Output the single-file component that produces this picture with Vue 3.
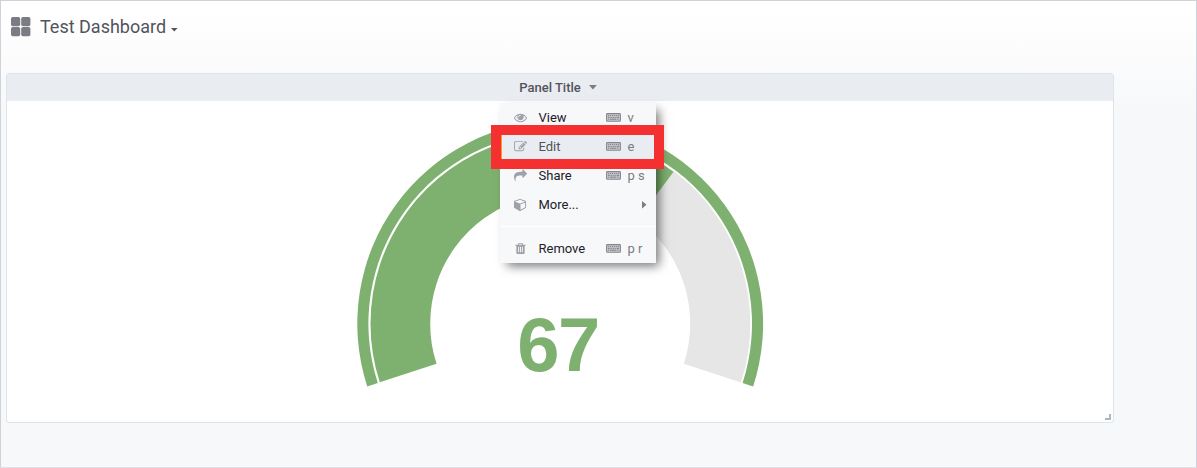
<script setup>
const icons = {
  eye: 'M1664 960q-152-236-381-353 61 104 61 225 0 185-131.5 316.5t-316.5 131.5-316.5-131.5-131.5-316.5q0-121 61-225-229 117-381 353 133 205 333.5 326.5t434.5 121.5 434.5-121.5 333.5-326.5zm-720-384q0-20-14-34t-34-14q-125 0-214.5 89.5t-89.5 214.5q0 20 14 34t34 14 34-14 14-34q0-86 61-147t147-61q20 0 34-14t14-34zm848 384q0 34-20 69-140 230-376.5 368.5t-499.5 138.5-499.5-139-376.5-368q-20-35-20-69t20-69q140-229 376.5-368t499.5-139 499.5 139 376.5 368q20 35 20 69z',
  edit: 'M888 1184l116-116-152-152-116 116v56h96v96h56zm440-720q-16-16-33 1l-350 350q-17 17-1 33t33-1l350-350q17-17 1-33zm80 594v190q0 119-84.5 203.5t-203.5 84.5h-832q-119 0-203.5-84.5t-84.5-203.5v-832q0-119 84.5-203.5t203.5-84.5h832q63 0 117 25 15 7 18 23 3 17-9 29l-49 49q-14 14-32 8-23-6-45-6h-832q-66 0-113 47t-47 113v832q0 66 47 113t113 47h832q66 0 113-47t47-113v-126q0-13 9-22l64-64q15-15 35-7t20 29zm-96-738l288 288-672 672h-288v-288zm444 132l-92 92-288-288 92-92q28-28 68-28t68 28l152 152q28 28 28 68t-28 68z',
  share: 'M1792 640q0 26-19 45l-512 512q-19 19-45 19t-45-19-19-45v-256h-224q-98 0-175.5 6t-154 21.5-133 42.5-105.5 69.5-80 101-48.5 138.5-17.5 181q0 55 5 123 0 6 2.5 23.5t2.5 26.5q0 15-8.5 25t-23.5 10q-16 0-28-17-7-9-13-22t-13.5-30-10.5-24q-127-285-127-451 0-199 53-333 162-403 875-403h224v-256q0-26 19-45t45-19 45 19l512 512q19 19 19 45z',
  cube: 'M896 1629l640-349v-636l-640 233v752zm-64-865l698-254-698-254-698 254zm832-252v768q0 35-18 65t-49 47l-704 384q-28 16-61 16t-61-16l-704-384q-31-17-49-47t-18-65v-768q0-40 23-73t61-47l704-256q22-8 44-8t44 8l704 256q38 14 61 47t23 73z',
  trash: 'M704 1376v-704q0-14-9-23t-23-9h-64q-14 0-23 9t-9 23v704q0 14 9 23t23 9h64q14 0 23-9t9-23zm256 0v-704q0-14-9-23t-23-9h-64q-14 0-23 9t-9 23v704q0 14 9 23t23 9h64q14 0 23-9t9-23zm256 0v-704q0-14-9-23t-23-9h-64q-14 0-23 9t-9 23v704q0 14 9 23t23 9h64q14 0 23-9t9-23zm-544-992h448l-48-117q-7-9-17-11h-317q-10 2-17 11zm928 32v64q0 14-9 23t-23 9h-96v948q0 83-47 143.5t-113 60.5h-832q-66 0-113-58.5t-47-141.5v-952h-96q-14 0-23-9t-9-23v-64q0-14 9-23t23-9h309l70-167q15-37 54-63t79-26h320q40 0 79 26t54 63l70 167h309q14 0 23 9t9 23z',
}

const items = [
  { label: 'View', icon: 'eye', keys: 'v' },
  { label: 'Edit', icon: 'edit', keys: 'e', active: true },
  { label: 'Share', icon: 'share', keys: 'p s' },
  { label: 'More...', icon: 'cube', submenu: true },
  { label: 'Remove', icon: 'trash', keys: 'p r', divided: true },
]

// Gauge geometry in the coordinates of the panel body
const cx = 553.2
const cy = 222.7
const value = 67
const START = 198
const SWEEP = 216

function point(r, deg) {
  const a = (deg * Math.PI) / 180
  return `${(cx + r * Math.cos(a)).toFixed(2)} ${(cy - r * Math.sin(a)).toFixed(2)}`
}

function ring(inner, outer, from, to) {
  const a = START - SWEEP * from
  const b = START - SWEEP * to
  const large = a - b > 180 ? 1 : 0
  return `M${point(outer, a)}A${outer} ${outer} 0 ${large} 1 ${point(outer, b)}L${point(inner, b)}A${inner} ${inner} 0 ${large} 0 ${point(inner, a)}Z`
}

const track = ring(130, 190.1, value / 100, 1)
const fill = ring(130, 189.7, 0, value / 100)
const threshold = ring(191.8, 202.9, 0, 1)
</script>

<template>
  <div class="page">
    <header class="navbar">
      <svg class="grid-icon" viewBox="0 0 20 20">
        <rect x="0" y="0" width="9.2" height="9.2" rx="1.8" />
        <rect x="10.2" y="0" width="9.2" height="9.2" rx="1.8" />
        <rect x="0" y="10" width="9.2" height="9.2" rx="1.8" />
        <rect x="10.2" y="10" width="9.2" height="9.2" rx="1.8" />
      </svg>
      <span class="title">Test Dashboard</span>
      <svg class="title-caret" viewBox="0 0 7 4"><path d="M0 0h6.6L3.3 3.6z" /></svg>
    </header>

    <section class="panel">
      <div class="panel-header">
        <span>Panel Title</span>
        <svg class="panel-caret" viewBox="0 0 8 5"><path d="M0 0h7.8L3.9 4.5z" /></svg>
      </div>
      <div class="panel-body">
        <svg class="gauge" viewBox="0 0 1106 321">
          <path class="track" :d="track" />
          <path class="ok" :d="fill" />
          <path class="ok" :d="threshold" />
          <text class="ok value" x="551" y="270" text-anchor="middle">{{ value }}</text>
        </svg>
      </div>
      <svg class="resize" viewBox="0 0 6 6"><path d="M4 0h2v6H0V4h4z" /></svg>

      <div class="menu">
        <div
          v-for="item in items"
          :key="item.label"
          class="entry"
          :class="{ divided: item.divided }"
        >
          <div class="item" :class="{ active: item.active }">
            <svg class="icon" viewBox="0 0 1792 1792"><path :d="icons[item.icon]" /></svg>
            <span class="label">{{ item.label }}</span>
            <svg v-if="item.submenu" class="arrow" viewBox="0 0 5 8"><path d="M0 0l4.5 3.8L0 7.6z" /></svg>
            <template v-else>
              <svg class="keyboard" viewBox="0 0 15 9">
                <rect x=".6" y=".6" width="13.8" height="7.6" rx=".8" class="case" />
                <path class="keys" d="M2 2.6h1.2m.8 0h1.2m.8 0h1.2m.8 0h1.2m.8 0h1.2m.8 0h1M2 4.4h1.8m.8 0h1.2m.8 0h1.2m.8 0h1.2m.8 0h2.4M2 6.2h1.2m.8 0h6.4m.8 0h1.4" />
              </svg>
              <span class="shortcut">{{ item.keys }}</span>
            </template>
          </div>
        </div>
        <div class="highlight"></div>
      </div>
    </section>
  </div>
</template>

<style>
body {
  margin: 0;
}
</style>

<style scoped>
.page {
  box-sizing: border-box;
  width: 1197px;
  height: 468px;
  overflow: hidden;
  border: 1px solid #d0d2da;
  border-bottom-color: #dfe1e5;
  background: linear-gradient(180deg, #fff 10px, #f7f8fa 110px);
  font-family: Roboto, "Liberation Sans", sans-serif;
  color: #52545c;
}
.navbar {
  display: flex;
  align-items: center;
  height: 52px;
  padding-left: 10px;
}
.grid-icon {
  width: 20px;
  height: 20px;
  fill: #7b7c83;
}
.title {
  margin-left: 9px;
  font-size: 18px;
  line-height: 24px;
}
.title-caret {
  width: 7px;
  height: 4px;
  margin: 5px 0 0 5px;
  fill: #52545c;
}
.panel {
  position: relative;
  box-sizing: border-box;
  width: 1108px;
  height: 350px;
  margin: 20px 0 0 5px;
  border: 1px solid #dde4ed;
  border-radius: 3px;
  background: #fff;
}
.panel-header {
  display: flex;
  align-items: center;
  justify-content: center;
  box-sizing: border-box;
  height: 27px;
  padding-right: 4px;
  background: #e9ecf1;
  font-size: 13px;
  font-weight: 500;
  color: #52545c;
}
.panel-caret {
  width: 8px;
  height: 5px;
  margin: 0 0 0 8px;
  fill: #7b7c83;
}
.panel-body {
  height: 321px;
}
.gauge {
  display: block;
  width: 1106px;
  height: 321px;
}
.track {
  fill: #e6e6e6;
}
.ok {
  fill: #7eb06f;
}
.value {
  font: bold 76px "Liberation Sans", Arial, sans-serif;
  letter-spacing: -1.5px;
}
.resize {
  position: absolute;
  right: 2px;
  bottom: 2px;
  width: 6px;
  height: 6px;
  fill: #acb6bf;
}
.menu {
  position: absolute;
  left: 493px;
  top: 29px;
  box-sizing: border-box;
  width: 156px;
  height: 160px;
  background: #f7f8fa;
  box-shadow: 5px 5px 10px -2px rgba(0, 0, 0, 0.55);
}
.entry.divided {
  margin-top: 7px;
  padding-top: 7px;
  border-top: 1px solid #fff;
}
.item {
  display: flex;
  align-items: center;
  box-sizing: border-box;
  height: 29px;
  padding-left: 14px;
  font-size: 13px;
  color: #1e2028;
}
.item.active {
  color: #52545c;
  background: #e9ecf1;
}
.icon {
  width: 13px;
  height: 13px;
  fill: #9fa1aa;
}
.label {
  width: 68px;
  margin-left: 11.5px;
}
.keyboard {
  width: 15px;
  height: 9px;
  margin-left: -0.5px;
}
.case {
  fill: #c9cad0;
  stroke: #85868e;
  stroke-width: 1.1;
}
.keys {
  stroke: #7f8088;
  stroke-width: 1;
}
.shortcut {
  margin-left: 6.5px;
  color: #7b7c83;
}
.arrow {
  width: 5px;
  height: 8px;
  margin-left: 35.5px;
  fill: #7b7c83;
}
.highlight {
  position: absolute;
  left: -9px;
  top: 22px;
  box-sizing: border-box;
  width: 173px;
  height: 44px;
  border: 10px solid #f53030;
}
.highlight::before {
  content: "";
  display: block;
  width: 1px;
  height: 24px;
  background: #ff9a1f;
}
</style>
